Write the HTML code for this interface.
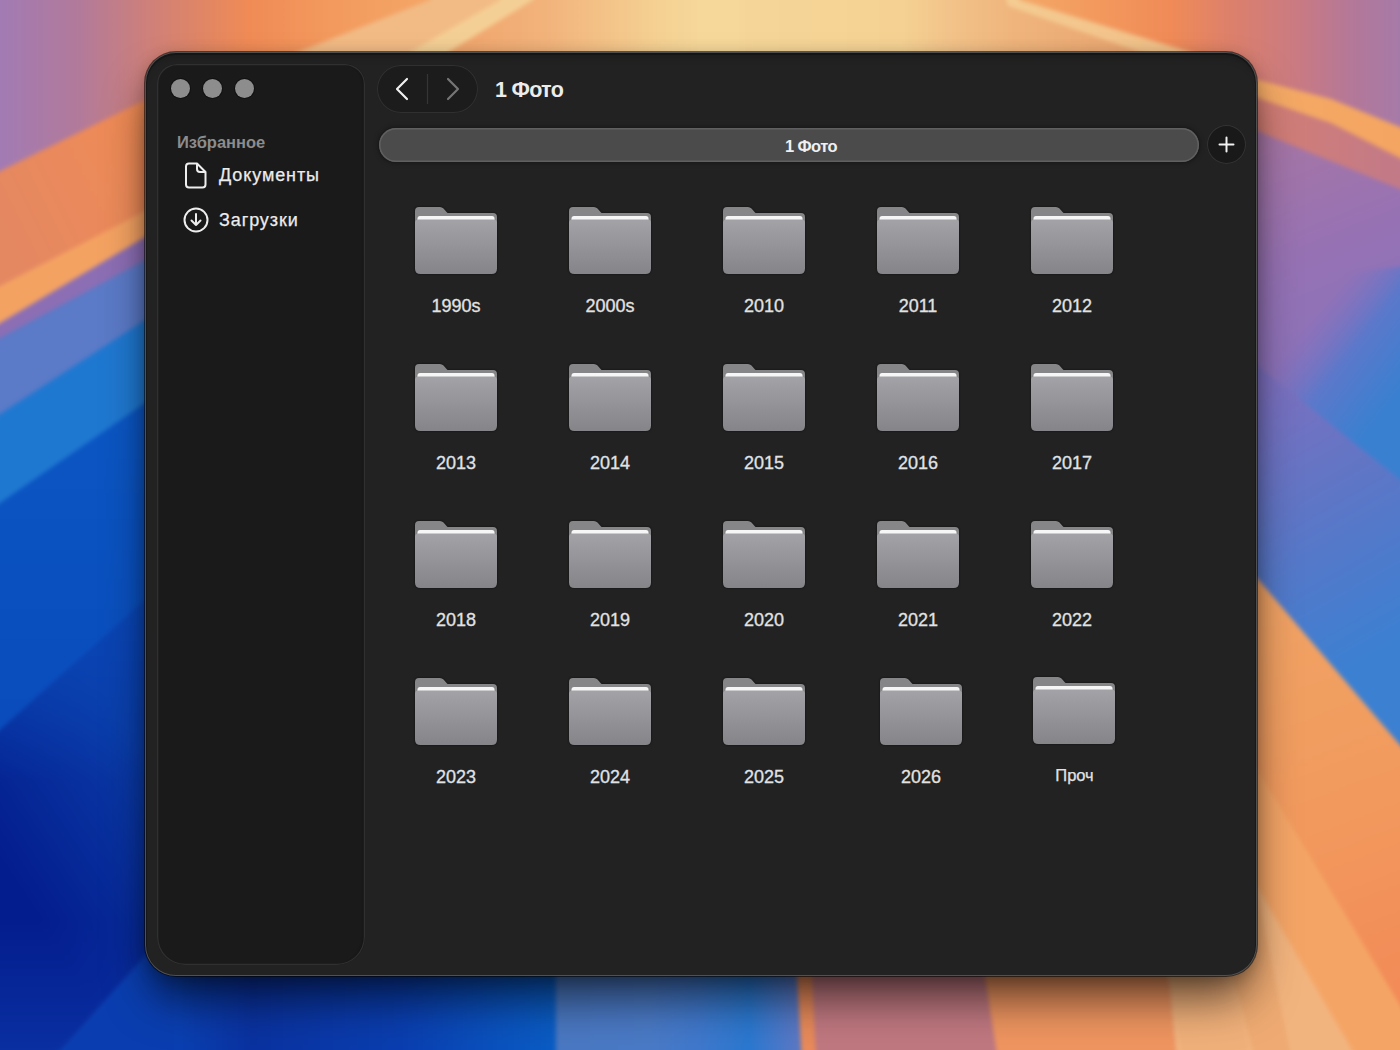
<!DOCTYPE html>
<html><head><meta charset="utf-8">
<style>
html,body{margin:0;padding:0;width:1400px;height:1050px;overflow:hidden;background:#0b4fc2;}
body{position:relative;font-family:"Liberation Sans",sans-serif;}
#wall{position:absolute;left:0;top:0;width:1400px;height:1050px;display:block;}
.win{position:absolute;left:145px;top:52px;width:1112px;height:924px;border-radius:31px;background:#222222;
  box-shadow:0 0 0 1px rgba(0,0,0,.55),inset 0 0 0 1px rgba(150,150,150,.45),inset 0 1px 0 2px rgba(0,0,0,.25),inset 0 10px 8px -6px rgba(0,0,0,.25),0 28px 45px -6px rgba(0,0,0,.62),0 3px 16px rgba(0,0,0,.22);overflow:hidden;}
.side{position:absolute;left:12px;top:12px;width:208px;height:901px;border-radius:20px 20px 28px 28px;background:#1a1a1a;
  box-shadow:inset 0 0 0 1.3px #303030,inset -3px 0 2px -1px #131313;}
.tl{position:absolute;top:15px;width:19px;height:19px;border-radius:50%;background:#8d8d8d;box-shadow:0 0 0 1px #111;}
.fav{position:absolute;left:20px;top:70px;font-size:16.5px;line-height:1;font-weight:bold;color:#8c8c8c;}
.item{position:absolute;left:62px;font-size:18px;line-height:1;color:#ececec;-webkit-text-stroke:0.25px #ececec;letter-spacing:0.9px;}
.nav{position:absolute;left:232px;top:13px;width:101px;height:48px;border-radius:24px;background:#1c1c1c;box-shadow:inset 0 0 0 1px #303030;}
.title{position:absolute;left:350px;top:27.5px;font-size:21.5px;letter-spacing:-0.7px;line-height:1;font-weight:bold;color:#ececec;}
.path{position:absolute;left:234px;top:76px;width:820px;height:34px;border-radius:17px;background:#4b4b4b;
  box-shadow:inset 0 0 0 1.5px #606060, 0 0 0 1px #1b1b1b, 0 0 5px 1px rgba(0,0,0,.35);}
.path span{position:absolute;left:-14px;right:-58px;top:9.5px;text-align:center;font-size:16.5px;letter-spacing:-0.6px;line-height:1;font-weight:bold;color:#f0f0f0;}
.plus{position:absolute;left:1062px;top:73px;width:39px;height:39px;border-radius:50%;background:#191919;box-shadow:inset 0 0 0 1px #333;}
.f{position:absolute;width:82px;height:67px;overflow:visible;filter:drop-shadow(0 0 1px rgba(0,0,0,.6));}
.lbl{position:absolute;width:140px;text-align:center;font-size:18px;line-height:1;color:#e2e2e2;-webkit-text-stroke:0.3px #e2e2e2;}
</style></head><body>
<svg id="wall" viewBox="0 0 1400 1050" width="1400" height="1050">
  <defs>
    <filter id="bl" x="-5%" y="-5%" width="110%" height="110%" color-interpolation-filters="sRGB"><feGaussianBlur stdDeviation="2"/></filter>
    <linearGradient id="gT" gradientUnits="userSpaceOnUse" x1="0" y1="0" x2="1400" y2="0">
      <stop offset="0" stop-color="#a27bb4"/>
      <stop offset="0.057" stop-color="#b27a9a"/>
      <stop offset="0.107" stop-color="#cf8079"/>
      <stop offset="0.15" stop-color="#e38762"/>
      <stop offset="0.178" stop-color="#f08b56"/>
      <stop offset="0.236" stop-color="#f39a5e"/>
      <stop offset="0.30" stop-color="#f4a566"/>
      <stop offset="0.50" stop-color="#f5d196"/>
      <stop offset="0.607" stop-color="#f6d99c"/>
      <stop offset="0.68" stop-color="#f5d296"/>
      <stop offset="0.73" stop-color="#f3a868"/>
      <stop offset="0.78" stop-color="#f39a5e"/>
      <stop offset="0.836" stop-color="#f08b57"/>
      <stop offset="0.88" stop-color="#dc806c"/>
      <stop offset="0.93" stop-color="#c87a84"/>
      <stop offset="0.965" stop-color="#b47898"/>
      <stop offset="1" stop-color="#a67aa8"/>
    </linearGradient>
    <linearGradient id="gTpale" gradientUnits="userSpaceOnUse" x1="450" y1="0" x2="700" y2="0">
      <stop offset="0" stop-color="#f0a46c"/>
      <stop offset="0.4" stop-color="#f2b47c"/>
      <stop offset="0.85" stop-color="#f5d294"/>
      <stop offset="1" stop-color="#f6d89a"/>
    </linearGradient>
    <linearGradient id="gL0" gradientUnits="userSpaceOnUse" x1="0" y1="40" x2="160" y2="90">
      <stop offset="0" stop-color="#a57ab0"/>
      <stop offset="1" stop-color="#c98080"/>
    </linearGradient>
    <linearGradient id="gLor" gradientUnits="userSpaceOnUse" x1="0" y1="230" x2="160" y2="150">
      <stop offset="0" stop-color="#e48862"/>
      <stop offset="1" stop-color="#f08b55"/>
    </linearGradient>
    <linearGradient id="gLblue2" gradientUnits="userSpaceOnUse" x1="0" y1="420" x2="0" y2="720">
      <stop offset="0" stop-color="#0b56c3"/>
      <stop offset="1" stop-color="#0a4cbc"/>
    </linearGradient>
    <linearGradient id="gRor" gradientUnits="userSpaceOnUse" x1="1257" y1="620" x2="1400" y2="1000">
      <stop offset="0" stop-color="#f1a264"/>
      <stop offset="0.5" stop-color="#f29a5e"/>
      <stop offset="1" stop-color="#f28a57"/>
    </linearGradient>
    <linearGradient id="gLdeep" gradientUnits="userSpaceOnUse" x1="0" y1="860" x2="150" y2="760">
      <stop offset="0" stop-color="#041d8e"/>
      <stop offset="1" stop-color="#0a3ca8"/>
    </linearGradient>
    <linearGradient id="gLbot" gradientUnits="userSpaceOnUse" x1="0" y1="920" x2="0" y2="1050">
      <stop offset="0" stop-color="#0a32a4" stop-opacity="0"/>
      <stop offset="1" stop-color="#0a32a4" stop-opacity="0.85"/>
    </linearGradient>
    <linearGradient id="gLdeepTop" gradientUnits="userSpaceOnUse" x1="0" y1="600" x2="0" y2="780">
      <stop offset="0" stop-color="#0a46b6" stop-opacity="1"/>
      <stop offset="1" stop-color="#0a46b6" stop-opacity="0"/>
    </linearGradient>
    <linearGradient id="gRunder" gradientUnits="userSpaceOnUse" x1="700" y1="0" x2="1400" y2="0">
      <stop offset="0" stop-color="#f6d89a"/>
      <stop offset="0.286" stop-color="#f5d294"/>
      <stop offset="0.357" stop-color="#f2c38a"/>
      <stop offset="0.45" stop-color="#efb47c"/>
      <stop offset="0.7" stop-color="#e9a06c"/>
      <stop offset="0.796" stop-color="#d47e74"/>
      <stop offset="1" stop-color="#c27a88"/>
    </linearGradient>
    <linearGradient id="gRband" gradientUnits="userSpaceOnUse" x1="1000" y1="0" x2="1400" y2="0">
      <stop offset="0" stop-color="#f4cc92"/>
      <stop offset="0.45" stop-color="#f2c088"/>
      <stop offset="0.64" stop-color="#f4aa66"/>
      <stop offset="1" stop-color="#f4a561"/>
    </linearGradient>
    <linearGradient id="gRpur" gradientUnits="userSpaceOnUse" x1="1250" y1="150" x2="1400" y2="520">
      <stop offset="0" stop-color="#a676a6"/>
      <stop offset="0.3" stop-color="#9672b4"/>
      <stop offset="1" stop-color="#7a72c4"/>
    </linearGradient>
    <linearGradient id="gRblueA" gradientUnits="userSpaceOnUse" x1="1310" y1="320" x2="1400" y2="390">
      <stop offset="0" stop-color="#7a72c4" stop-opacity="0"/>
      <stop offset="0.45" stop-color="#5c78ca"/>
      <stop offset="1" stop-color="#3a80d0"/>
    </linearGradient>
    <linearGradient id="gRblueB" gradientUnits="userSpaceOnUse" x1="1257" y1="390" x2="1400" y2="640">
      <stop offset="0" stop-color="#7c70c0"/>
      <stop offset="0.45" stop-color="#5e76c6"/>
      <stop offset="1" stop-color="#3c80d2"/>
    </linearGradient>
    <linearGradient id="gB" gradientUnits="userSpaceOnUse" x1="0" y1="0" x2="1400" y2="0">
      <stop offset="0.125" stop-color="#0a40b2"/>
      <stop offset="0.18" stop-color="#0a32a0"/>
      <stop offset="0.286" stop-color="#0a3eb0"/>
      <stop offset="0.357" stop-color="#0a52be"/>
      <stop offset="0.396" stop-color="#0a5cc4"/>
      <stop offset="0.398" stop-color="#4a78c2"/>
      <stop offset="0.464" stop-color="#4a7ac6"/>
      <stop offset="0.5" stop-color="#3f78cc"/>
      <stop offset="0.535" stop-color="#2a78d0"/>
      <stop offset="0.55" stop-color="#4078cc"/>
      <stop offset="0.569" stop-color="#5a78c4"/>
    </linearGradient>
  </defs>
  <rect width="1400" height="1050" fill="#0b50c2"/>
  <g filter="url(#bl)">
    <!-- top base -->
    <rect x="-50" y="-50" width="1500" height="700" fill="url(#gT)"/>
    <!-- LEFT bands -->
    
    <path d="M-50 196 L0 171 L145 100 L160 90 L200 90 L420 90 L420 1100 L-50 1100 Z" fill="url(#gLor)"/>
    <path d="M-50 312 L0 286 L145 211 L250 156 L420 60 L420 1100 L-50 1100 Z" fill="#f4a262"/>
    <path d="M-50 352 L0 323 L145 237 L250 175 L420 70 L420 1100 L-50 1100 Z" fill="#8c6eb4"/>
    <path d="M-50 365 L0 338 L145 260 L250 203 L420 100 L420 1100 L-50 1100 Z" fill="#5b7ac7"/>
    <path d="M-50 446 L0 414 L145 320 L250 252 L420 150 L420 1100 L-50 1100 Z" fill="#1f78d0"/>
    <path d="M-50 537 L0 503 L145 403 L250 331 L420 220 L420 1100 L-50 1100 Z" fill="url(#gLblue2)"/>
    <path d="M-50 775 L0 730 L145 600 L250 505 L420 350 L420 1100 L-50 1100 Z" fill="url(#gLdeep)"/>
    <path d="M-50 775 L0 730 L145 600 L250 505 L420 350 L420 1100 L-50 1100 Z" fill="url(#gLdeepTop)"/>
    <rect x="-50" y="900" width="300" height="200" fill="url(#gLbot)"/>
    <path d="M-50 1100 L60 1050 L150 950 L250 840 L250 1100 Z" fill="#0a3eb0"/>
    <!-- bottom middle -->
    <rect x="175" y="900" width="635" height="200" fill="url(#gB)"/>
    <!-- RIGHT side -->
    <path d="M990 -50 L1020 0 L1190 52 L1258 80 L1331 99 L1400 127 L1450 150 L1450 1100 L990 1100 Z" fill="url(#gRband)"/>
    <path d="M700 -50 L990 -50 L1008 6 L1180 66 L1258 98 L1331 123 L1400 158 L1450 180 L1450 1100 L1150 1100 L1150 300 L700 80 Z" fill="url(#gRunder)"/>
    <path d="M1150 80 L1258 131 L1331 161 L1400 189 L1450 210 L1450 1100 L1150 1100 Z" fill="url(#gRpur)"/>
    <path d="M1290 280 L1450 260 L1450 520 L1400 480 L1257 365 L1257 280 Z" fill="url(#gRblueA)"/>
    <path d="M1150 300 L1257 365 L1400 480 L1450 520 L1450 1100 L1150 1100 Z" fill="url(#gRblueB)"/>
    <path d="M1150 460 L1257 578 L1400 745 L1450 800 L1450 1100 L1150 1100 Z" fill="url(#gRor)"/>
    <path d="M1150 600 L1276 800 L1400 1005 L1450 1100 L1150 1100 Z" fill="#f4a566"/>
    <path d="M1150 700 L1255 883 L1352 1050 L1380 1100 L1150 1100 Z" fill="#f2b47e"/>
    <!-- bottom right rays -->
    <path d="M790 880 L797 976 L804 1100 L1180 1100 L1160 880 Z" fill="#e88a5a"/>
    <path d="M806 880 L812 976 L818 1100 L1180 1100 L1160 880 Z" fill="#c07880"/>
    <path d="M960 880 L985 976 L1004 1100 L1180 1100 L1160 880 Z" fill="#ef9560"/>
    <path d="M1140 880 L1171 990 L1190 1100 L1260 1100 L1233 978 L1200 880 Z" fill="#f0b07a"/>
    <path d="M1200 880 L1233 978 L1267 1100 L1300 1100 L1255 883 Z" fill="#eeaa72"/>
    <!-- TOP details -->
    <path d="M445 -20 L430 0 L298 52 L250 80 L420 80 L449 52 L533 0 L545 -20 Z" fill="#f2bb85"/>
    <path d="M510 -20 L500 0 L410 52 L390 80 L430 80 L449 52 L533 0 L545 -20 Z" fill="#f4cf95"/>
    <path d="M545 -20 L533 0 L449 52 L430 80 L740 80 L740 -20 Z" fill="url(#gTpale)"/>
  </g>
</svg>
<svg width="0" height="0" style="position:absolute">
  <defs>
    <linearGradient id="fg" x1="0" y1="0" x2="0" y2="1">
      <stop offset="0" stop-color="#a3a3a7"/><stop offset="1" stop-color="#858589"/>
    </linearGradient>
    <symbol id="folder" viewBox="0 0 82 67">
      <path d="M4 0 H25 Q27 0 28.5 1.5 L32 5.5 Q32.5 6 33.5 6 H78 Q82 6 82 10 V20 H0 V4 Q0 0 4 0 Z" fill="#868689"/>
      <rect x="2.5" y="9" width="77" height="6" rx="2.5" fill="#f6f6f6"/>
      <path d="M0 16 Q0 12.5 3.5 12.5 H78.5 Q82 12.5 82 16 V61.5 Q82 67 76.5 67 H5.5 Q0 67 0 61.5 Z" fill="url(#fg)"/>
    </symbol>
  </defs>
</svg>
<div class="win">
  <div class="side">
    <div class="tl" style="left:13.5px"></div>
    <div class="tl" style="left:45.5px"></div>
    <div class="tl" style="left:77.5px"></div>
    <div class="fav">Избранное</div>
    <svg style="position:absolute;left:28px;top:98px" width="22" height="27" viewBox="0 0 22 27">
      <path d="M4 1.5 H12 L20.5 10 V22.5 Q20.5 25.5 17.5 25.5 H4 Q1 25.5 1 22.5 V4.5 Q1 1.5 4 1.5 Z M12 1.5 V7 Q12 10 15 10 H20.5" fill="none" stroke="#eeeeee" stroke-width="2" stroke-linejoin="round"/>
    </svg>
    <div class="item" style="top:102px">Документы</div>
    <svg style="position:absolute;left:26px;top:143px" width="26" height="26" viewBox="0 0 26 26">
      <circle cx="13" cy="13" r="11.5" fill="none" stroke="#eeeeee" stroke-width="2"/>
      <path d="M13 7 V18 M8.5 13.5 L13 18 L17.5 13.5" fill="none" stroke="#eeeeee" stroke-width="2" stroke-linecap="round" stroke-linejoin="round"/>
    </svg>
    <div class="item" style="top:147px">Загрузки</div>
  </div>
  <div class="nav">
    <svg style="position:absolute;left:0;top:0" width="101" height="48" viewBox="0 0 101 48">
      <path d="M30 14 L20 24 L30 34" fill="none" stroke="#f0f0f0" stroke-width="2.2" stroke-linecap="round" stroke-linejoin="round"/>
      <line x1="50.5" y1="9" x2="50.5" y2="39" stroke="#353535" stroke-width="1.2"/>
      <path d="M71 14 L81 24 L71 34" fill="none" stroke="#767676" stroke-width="2.2" stroke-linecap="round" stroke-linejoin="round"/>
    </svg>
  </div>
  <div class="title">1 Фото</div>
  <div class="path"><span>1 Фото</span></div>
  <div class="plus">
    <svg style="position:absolute;left:0;top:0" width="39" height="39" viewBox="0 0 39 39">
      <path d="M19.5 12.5 V26.5 M12.5 19.5 H26.5" stroke="#f2f2f2" stroke-width="2" stroke-linecap="round"/>
    </svg>
  </div>
  <!--GRID-->
  <svg class="f" style="left:270.0px;top:154.7px"><use href="#folder"/></svg>
  <div class="lbl" style="left:241.0px;top:245.0px">1990s</div>
  <svg class="f" style="left:424.0px;top:154.7px"><use href="#folder"/></svg>
  <div class="lbl" style="left:395.0px;top:245.0px">2000s</div>
  <svg class="f" style="left:578.0px;top:154.7px"><use href="#folder"/></svg>
  <div class="lbl" style="left:549.0px;top:245.0px">2010</div>
  <svg class="f" style="left:732.0px;top:154.7px"><use href="#folder"/></svg>
  <div class="lbl" style="left:703.0px;top:245.0px">2011</div>
  <svg class="f" style="left:886.0px;top:154.7px"><use href="#folder"/></svg>
  <div class="lbl" style="left:857.0px;top:245.0px">2012</div>
  <svg class="f" style="left:270.0px;top:311.7px"><use href="#folder"/></svg>
  <div class="lbl" style="left:241.0px;top:402.0px">2013</div>
  <svg class="f" style="left:424.0px;top:311.7px"><use href="#folder"/></svg>
  <div class="lbl" style="left:395.0px;top:402.0px">2014</div>
  <svg class="f" style="left:578.0px;top:311.7px"><use href="#folder"/></svg>
  <div class="lbl" style="left:549.0px;top:402.0px">2015</div>
  <svg class="f" style="left:732.0px;top:311.7px"><use href="#folder"/></svg>
  <div class="lbl" style="left:703.0px;top:402.0px">2016</div>
  <svg class="f" style="left:886.0px;top:311.7px"><use href="#folder"/></svg>
  <div class="lbl" style="left:857.0px;top:402.0px">2017</div>
  <svg class="f" style="left:270.0px;top:468.7px"><use href="#folder"/></svg>
  <div class="lbl" style="left:241.0px;top:559.0px">2018</div>
  <svg class="f" style="left:424.0px;top:468.7px"><use href="#folder"/></svg>
  <div class="lbl" style="left:395.0px;top:559.0px">2019</div>
  <svg class="f" style="left:578.0px;top:468.7px"><use href="#folder"/></svg>
  <div class="lbl" style="left:549.0px;top:559.0px">2020</div>
  <svg class="f" style="left:732.0px;top:468.7px"><use href="#folder"/></svg>
  <div class="lbl" style="left:703.0px;top:559.0px">2021</div>
  <svg class="f" style="left:886.0px;top:468.7px"><use href="#folder"/></svg>
  <div class="lbl" style="left:857.0px;top:559.0px">2022</div>
  <svg class="f" style="left:270.0px;top:625.7px"><use href="#folder"/></svg>
  <div class="lbl" style="left:241.0px;top:716.0px">2023</div>
  <svg class="f" style="left:424.0px;top:625.7px"><use href="#folder"/></svg>
  <div class="lbl" style="left:395.0px;top:716.0px">2024</div>
  <svg class="f" style="left:578.0px;top:625.7px"><use href="#folder"/></svg>
  <div class="lbl" style="left:549.0px;top:716.0px">2025</div>
  <svg class="f" style="left:735.0px;top:625.7px"><use href="#folder"/></svg>
  <div class="lbl" style="left:706.0px;top:716.0px">2026</div>
  <svg class="f" style="left:887.5px;top:624.5px"><use href="#folder"/></svg>
  <div class="lbl" style="left:859.5px;top:715.0px;font-size:16.5px;-webkit-text-stroke:0.25px #e2e2e2">Проч</div>
  <!--/GRID-->
</div>
</body></html>
